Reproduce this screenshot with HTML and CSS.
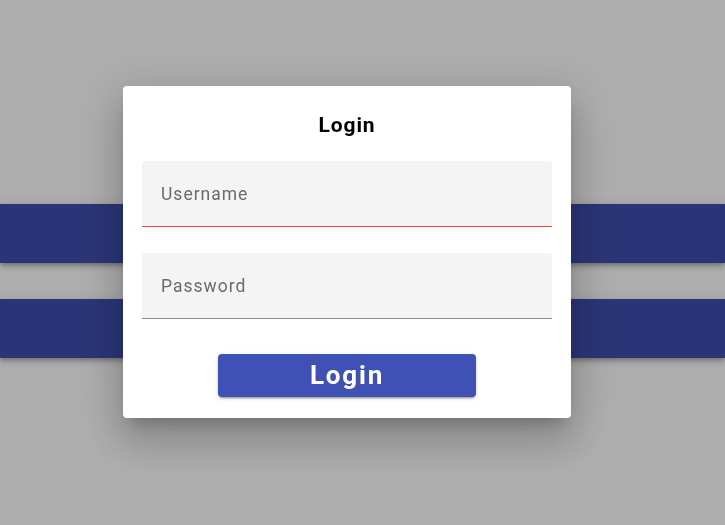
FILE: index.html
```html
<!DOCTYPE html>
<html lang="en">
<head>
  <meta charset="UTF-8">
  <meta name="viewport" content="width=device-width, initial-scale=1.0">
  <title>Login</title>
  <link rel="stylesheet" href="styles.css">
</head>
<body>
  <div class="page">
    <div class="toolbar"></div>
    <div class="toolbar"></div>
  </div>

  <div class="backdrop">
    <div class="dialog">
      <h2 class="dialog-title">Login</h2>
      <form class="login-form">
        <input class="field field-invalid" type="text" placeholder="Username">
        <input class="field" type="password" placeholder="Password">
        <button class="login-btn" type="button">Login</button>
      </form>
    </div>
  </div>
</body>
</html>
```

FILE: styles.css
```css
html, body {
  margin: 0;
  height: 100%;
}
body {
  font-family: Roboto, "Noto Sans", Arial, sans-serif;
  background-color: #fff;
}
.page {
  padding-top: 204px;
}
.toolbar {
  height: 59px;
  margin-bottom: 36px;
  background-color: #3f4fb0;
  box-shadow: 0 2px 4px -1px rgba(0,0,0,0.2), 0 4px 5px 0 rgba(0,0,0,0.14), 0 1px 10px 0 rgba(0,0,0,0.12);
}
.backdrop {
  position: fixed;
  inset: 0;
  background: rgba(0,0,0,0.32);
  padding: 86px 0 0 123px;
}
.dialog {
  width: 448px;
  height: 332px;
  box-sizing: border-box;
  padding: 27px 19px 21px;
  background: #fff;
  border-radius: 4px;
  box-shadow: 0 11px 15px -7px rgba(0,0,0,0.2), 0 24px 38px 3px rgba(0,0,0,0.14), 0 9px 46px 8px rgba(0,0,0,0.12);
}
.dialog-title {
  margin: 0 0 24px;
  font-size: 21px;
  line-height: 24px;
  font-weight: 700;
  letter-spacing: 0.9px;
  text-align: center;
  color: #000;
}
.login-form {
  display: flex;
  flex-direction: column;
}
.field {
  height: 66px;
  box-sizing: border-box;
  padding: 0 19px;
  margin: 0 0 26px;
  border: none;
  border-bottom: 1px solid #8c8c8c;
  border-radius: 4px 4px 0 0;
  background: #f4f4f4;
  font-family: inherit;
  font-size: 17.5px;
  letter-spacing: 1px;
  color: #333;
  outline: none;
}
.field::placeholder {
  color: #6b6b6b;
}
.field-invalid {
  border-bottom-color: #f44336;
}
.login-form .field:last-of-type {
  margin-bottom: 35px;
}
.login-btn {
  align-self: center;
  width: 258px;
  height: 43px;
  padding: 0;
  border: none;
  border-radius: 4px;
  background-color: #3f51b5;
  color: #fff;
  font-family: inherit;
  font-size: 26px;
  font-weight: 700;
  letter-spacing: 1.8px;
  line-height: 43px;
  cursor: pointer;
  box-shadow: 0 3px 1px -2px rgba(0,0,0,0.2), 0 2px 2px 0 rgba(0,0,0,0.14), 0 1px 5px 0 rgba(0,0,0,0.12);
}
```
